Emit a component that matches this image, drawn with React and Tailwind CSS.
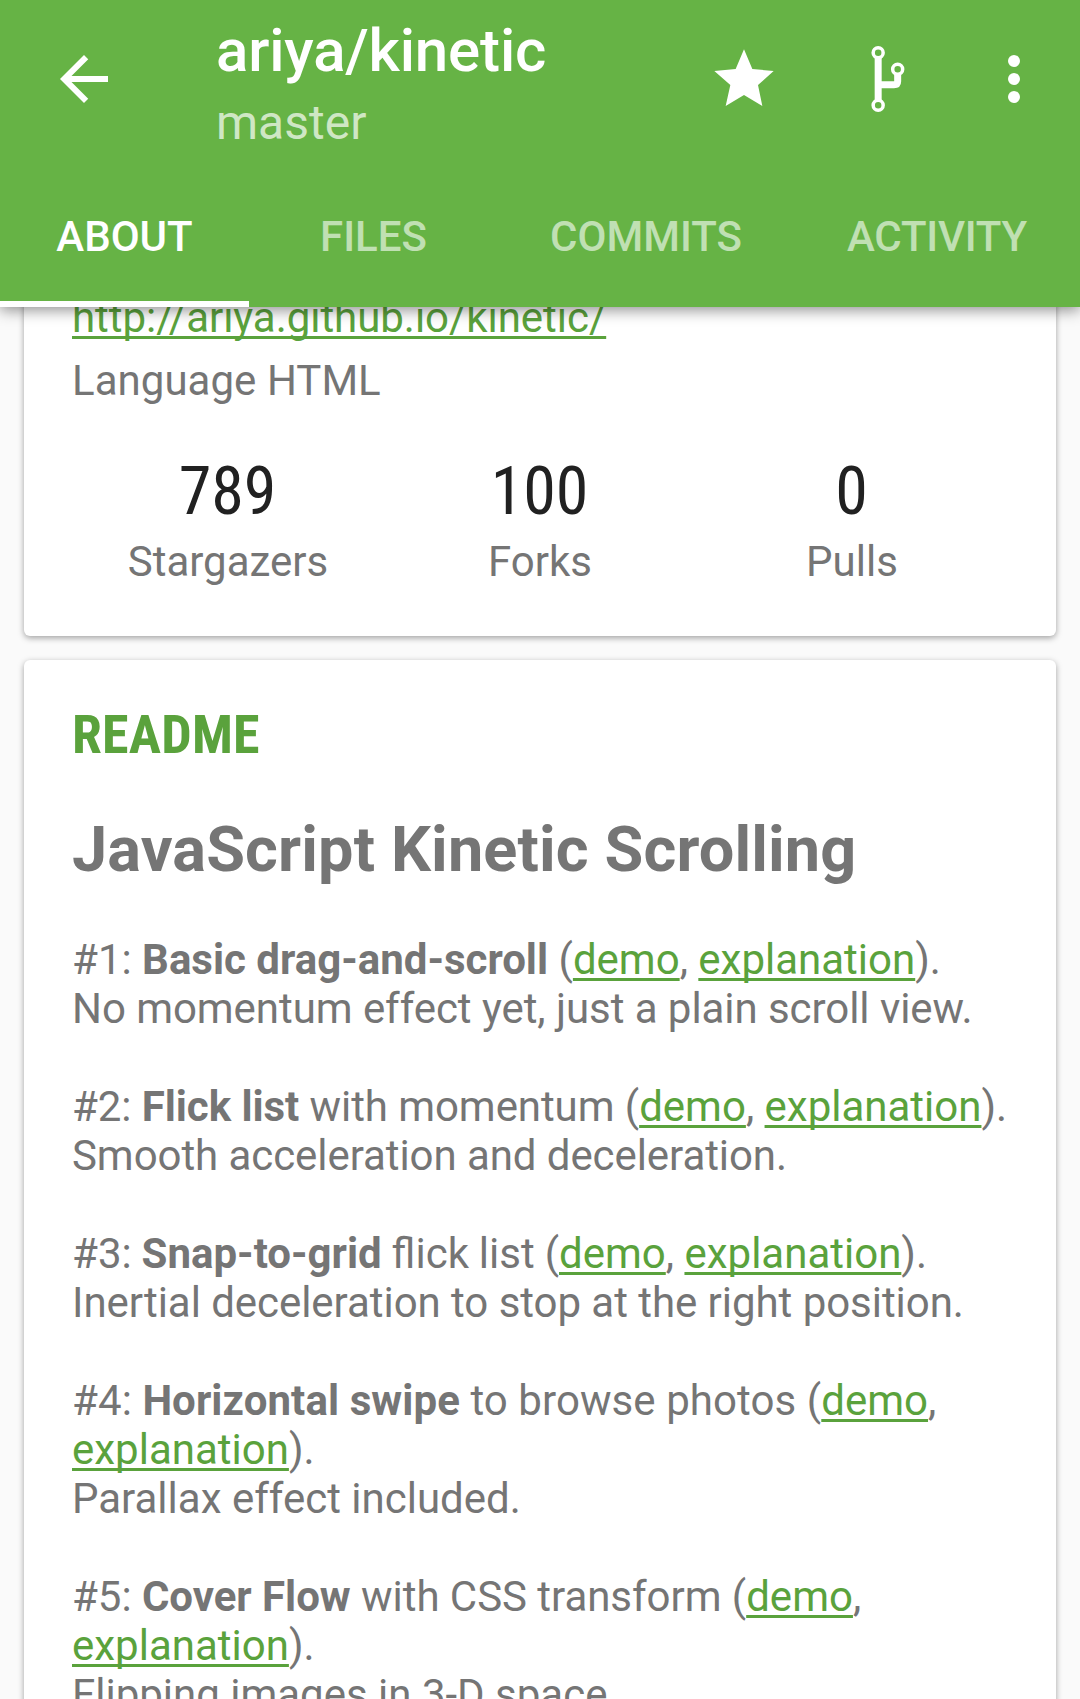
const tabs = [
  { label: "ABOUT", style: "w-[249px]", active: true },
  { label: "FILES", style: "w-[249px]" },
  { label: "COMMITS", style: "w-[296px]" },
  { label: "ACTIVITY", style: "w-[286px] tracking-[-0.25px]" },
];

const stats = [
  { value: "789", label: "Stargazers" },
  { value: "100", label: "Forks" },
  { value: "0", label: "Pulls" },
];

const entries = [
  {
    n: 1,
    title: "Basic drag-and-scroll",
    rest: "",
    note: "No momentum effect yet, just a plain scroll view.",
    lead: "",
    noteStyle: "tracking-[-0.055px]",
  },
  {
    n: 2,
    title: "Flick list",
    rest: " with momentum",
    note: "Smooth acceleration and deceleration.",
    lead: "tracking-[-0.07px]",
    noteStyle: "tracking-[-0.07px]",
  },
  {
    n: 3,
    title: "Snap-to-grid",
    rest: " flick list",
    note: "Inertial deceleration to stop at the right position.",
    lead: "[word-spacing:-0.5px]",
    noteStyle: "tracking-[-0.045px]",
  },
  {
    n: 4,
    title: "Horizontal swipe",
    rest: " to browse photos",
    note: "Parallax effect included.",
    lead: "tracking-[0.08px]",
    noteStyle: "",
  },
  {
    n: 5,
    title: "Cover Flow",
    rest: " with CSS transform",
    note: "Flipping images in 3-D space.",
    lead: "tracking-[-0.04px]",
    noteStyle: "",
  },
];

function Link({ children }) {
  return (
    <a
      href="#"
      className="text-[#5aa23c] underline decoration-[3px] underline-offset-[4px] [text-decoration-skip-ink:none]"
    >
      {children}
    </a>
  );
}

function BackIcon() {
  return (
    <svg className="size-[72px]" viewBox="0 0 24 24" fill="currentColor">
      <path d="M20 11H7.83l5.59-5.59L12 4l-8 8 8 8 1.41-1.41L7.83 13H20v-2z" />
    </svg>
  );
}

function StarIcon() {
  return (
    <svg className="size-[72px]" viewBox="84 69 216 216" fill="currentColor">
      <path d="M192 88L217 147L281 153L234 195L247 258L192 225L137 258L151 195L103 153L167 147Z" />
    </svg>
  );
}

function ForkIcon() {
  return (
    <svg className="size-[72px]" viewBox="516 69 216 216" fill="none" stroke="currentColor">
      <g strokeWidth="10.5">
        <circle cx="594.5" cy="98" r="15" />
        <circle cx="594.5" cy="256" r="15" />
        <circle cx="653" cy="148" r="15" />
      </g>
      <path d="M594.5 113V241M594.5 194.5H642Q653 194.5 653 184V163" strokeWidth="21" />
    </svg>
  );
}

function MoreIcon() {
  return (
    <svg className="size-[72px]" viewBox="0 0 24 24" fill="currentColor">
      <circle cx="12" cy="6" r="2" />
      <circle cx="12" cy="12" r="2" />
      <circle cx="12" cy="18" r="2" />
    </svg>
  );
}

export default function App() {
  return (
    <div className="flex h-[1699px] w-[1080px] flex-col overflow-hidden bg-[#fafafa] font-[Roboto,sans-serif] text-[42px] leading-[49px] text-[#757575]">
      <header className="relative z-10 h-[307px] shrink-0 bg-[#66b345] text-white shadow-[0_3px_14px_rgba(0,0,0,0.45)]">
        <div className="flex h-[158px] items-center pl-[48px] pr-[30px]">
          <BackIcon />
          <div className="ml-[96px] flex-1 self-start pt-[16px]">
            <h1 className="text-[60px] font-medium leading-[70px] tracking-[-0.16px]">ariya/kinetic</h1>
            <p className="mt-[9px] text-[48px] leading-[56px] text-white/70">master</p>
          </div>
          <div className="flex items-center">
            <StarIcon />
            <div className="ml-[72px]">
              <ForkIcon />
            </div>
            <div className="ml-[54px]">
              <MoreIcon />
            </div>
          </div>
        </div>
        <nav className="flex h-[149px] font-medium">
          {tabs.map((t) => (
            <div
              key={t.label}
              className={`${t.style} border-b-[6px] pt-[54px] text-center ${
                t.active ? "border-white text-white" : "border-transparent text-white/60"
              }`}
            >
              {t.label}
            </div>
          ))}
        </nav>
      </header>

      <main className="-mt-[14px] flex flex-col gap-[24px] px-[24px]">
        <section className="h-[343px] rounded-b-[6px] bg-white px-[48px] shadow-[0_2px_6px_rgba(0,0,0,0.36)]">
          <p className="tracking-[-0.04px]">
            <Link>http://ariya.github.io/kinetic/</Link>
          </p>
          <p className="mt-[14px] tracking-[0.04px]">Language HTML</p>
          <div className="mt-[48px] grid grid-cols-3 text-center">
            {stats.map((s) => (
              <div key={s.label}>
                <div className="pr-[1px] font-['Roboto_Condensed',Roboto,sans-serif] text-[66px] leading-[78px] text-[#212121] [font-stretch:75%]">
                  {s.value}
                </div>
                <div className="mt-[6px]">{s.label}</div>
              </div>
            ))}
          </div>
        </section>

        <section className="h-[1200px] rounded-[6px] bg-white px-[48px] pt-[43px] shadow-[0_2px_6px_rgba(0,0,0,0.36)]">
          <h2 className="font-['Roboto_Condensed',Roboto,sans-serif] text-[54px] font-bold leading-[64px] tracking-[0.2px] text-[#5aa23c] [font-stretch:75%]">
            README
          </h2>
          <h3 className="mt-[46px] text-[63px] font-bold leading-[74px] tracking-[0.14px]">
            JavaScript Kinetic Scrolling
          </h3>
          <div className="mt-[48px] flex flex-col gap-[49px]">
            {entries.map((e) => (
              <div key={e.n}>
                <p className="-mr-[12px]">
                  <span className={e.lead}>
                    #{e.n}: <b>{e.title}</b>
                    {e.rest} (
                  </span>
                  <Link>demo</Link>, <Link>explanation</Link>).
                </p>
                <p className={`whitespace-nowrap ${e.noteStyle}`}>{e.note}</p>
              </div>
            ))}
          </div>
        </section>
      </main>
    </div>
  );
}
